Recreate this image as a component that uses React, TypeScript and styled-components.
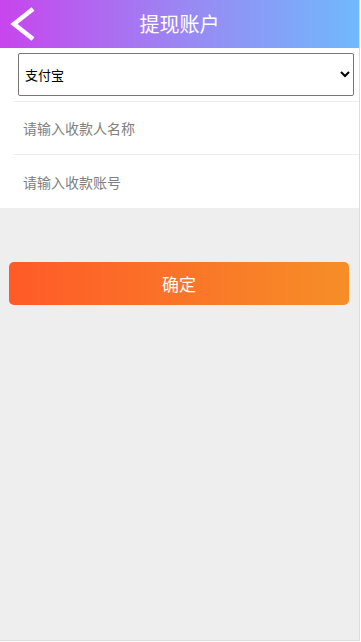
import React from "react";
import styled, { createGlobalStyle } from "styled-components";

const Global = createGlobalStyle`
  html, body { margin: 0; padding: 0; background: #fff; }
  body { font-family: "Microsoft YaHei", "Noto Sans CJK SC", "Liberation Sans", sans-serif; }
  * { box-sizing: border-box; }
`;

const Page = styled.div`
  width: 360px;
  min-height: 641px;
  background: #eeeeee;
  border-right: 1px solid #dcdcdc;
  border-bottom: 1px solid #dcdcdc;
  display: flex;
  flex-direction: column;
`;

const Header = styled.header`
  height: 48px;
  background: linear-gradient(90deg, #c845ed 0%, #9b86f3 50%, #70b9fc 100%);
  display: flex;
  align-items: center;
  justify-content: center;
  position: relative;
`;

const Back = styled.button`
  position: absolute;
  left: 8px;
  top: 6px;
  width: 30px;
  height: 36px;
  border: 0;
  padding: 0;
  background: transparent;
  display: flex;
  align-items: center;
  justify-content: center;
`;

const Title = styled.h1`
  margin: 0;
  color: #fff;
  font-size: 20px;
  font-weight: 400;
  line-height: 48px;
`;

const Form = styled.div`
  background: #fff;
  padding-left: 13px;
  display: flex;
  flex-direction: column;
`;

const SelectRow = styled.div`
  padding: 5px 5px 5px 5px;
  border-bottom: 1px solid #ececec;
`;

const Select = styled.select`
  width: 336px;
  height: 43px;
  border: 1px solid #767676;
  border-radius: 2px;
  background: #fff;
  font-size: 13px;
  font-family: "Microsoft YaHei", "Noto Sans CJK SC", sans-serif;
  color: #000;
  padding: 0 2px;
`;

const Row = styled.div<{ $last?: boolean }>`
  height: 53px;
  display: flex;
  align-items: center;
  border-bottom: ${(p) => (p.$last ? "none" : "1px solid #ececec")};
`;

const Input = styled.input`
  flex: 1;
  border: 0;
  outline: none;
  height: 40px;
  padding: 0 10px;
  font-size: 14px;
  font-family: "Microsoft YaHei", "Noto Sans CJK SC", sans-serif;
  color: #333;
  background: transparent;
  &::placeholder { color: #808080; }
`;

const ButtonWrap = styled.div`
  padding: 54px 10px 0 9px;
`;

const Submit = styled.button`
  width: 340px;
  height: 43px;
  border: 0;
  border-radius: 5px;
  background: linear-gradient(90deg, #ff5a28 0%, #f68e27 100%);
  color: #fff;
  font-size: 17px;
  font-family: "Microsoft YaHei", "Noto Sans CJK SC", sans-serif;
`;

export default function App() {
  return (
    <>
      <Global />
      <Page>
        <Header>
          <Back aria-label="返回">
            <svg width="28" height="34" viewBox="0 0 28 34">
              <path d="M24 2 L5 17 L24 32" fill="none" stroke="#fff" strokeWidth="4.5" strokeLinecap="butt" strokeLinejoin="miter" />
            </svg>
          </Back>
          <Title>提现账户</Title>
        </Header>
        <Form>
          <SelectRow>
            <Select defaultValue="alipay">
              <option value="alipay">支付宝</option>
              <option value="wechat">微信</option>
              <option value="bank">银行卡</option>
            </Select>
          </SelectRow>
          <Row>
            <Input placeholder="请输入收款人名称" />
          </Row>
          <Row $last>
            <Input placeholder="请输入收款账号" />
          </Row>
        </Form>
        <ButtonWrap>
          <Submit>确定</Submit>
        </ButtonWrap>
      </Page>
    </>
  );
}
